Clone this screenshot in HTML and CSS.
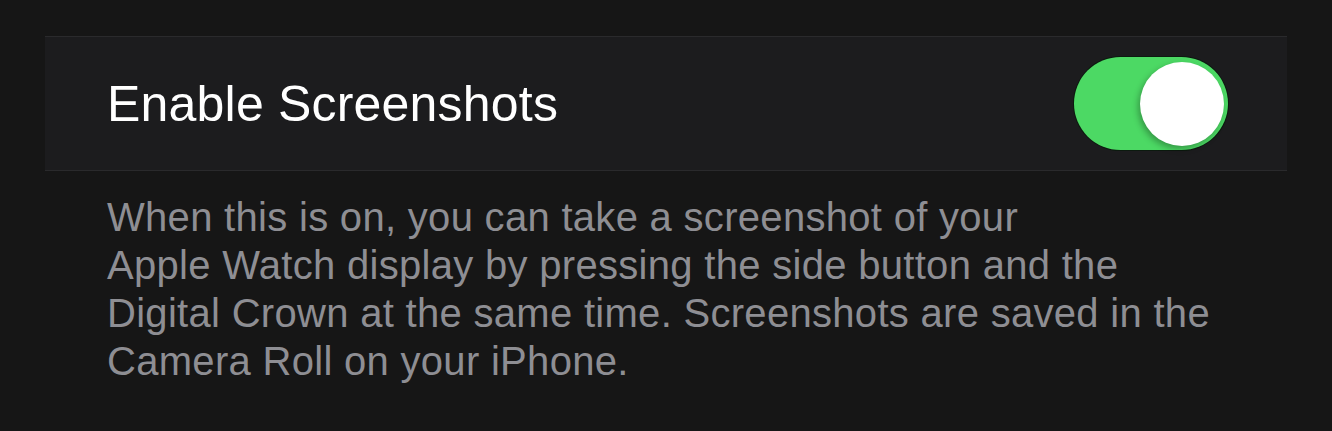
FILE: index.html
```html
<!DOCTYPE html>
<html>
<head>
<meta charset="utf-8">
<link rel="stylesheet" href="styles.css">
</head>
<body>
<div class="page">
  <div class="row">
    <span class="label">Enable Screenshots</span>
    <div class="toggle on"><div class="knob"></div></div>
  </div>
  <p class="footer">When this is on, you can take a screenshot of your<br>Apple Watch display by pressing the side button and the<br>Digital Crown at the same time. Screenshots are saved in the<br>Camera Roll on your iPhone.</p>
</div>
</body>
</html>
```
FILE: styles.css
```css
html, body {
  margin: 0;
  padding: 0;
  background: #161616;
}
.page {
  padding: 36px 45px 0 45px;
  font-family: "Liberation Sans", Arial, sans-serif;
}
.row {
  box-sizing: border-box;
  height: 135px;
  width: 1242px;
  background: #1c1c1e;
  border-top: 1px solid #2a2a2c;
  border-bottom: 1px solid #2a2a2c;
  display: flex;
  align-items: center;
  justify-content: space-between;
  padding: 0 59px 0 62px;
}
.label {
  color: #ffffff;
  font-size: 50px;
  line-height: 60px;
  letter-spacing: 0.2px;
}
.toggle {
  width: 154px;
  height: 93px;
  border-radius: 47px;
  background: #4cd964;
  box-shadow: 0 0 0 1px #0c1a0f;
  display: flex;
  align-items: center;
  justify-content: flex-end;
  padding-right: 4px;
  box-sizing: border-box;
}
.knob {
  width: 84px;
  height: 84px;
  border-radius: 50%;
  background: #ffffff;
  box-shadow: -2px 3px 6px rgba(0,0,0,0.3);
}
.footer {
  margin: 0;
  padding: 22px 0 0 62px;
  color: #8e8e93;
  font-size: 40px;
  line-height: 48px;
  letter-spacing: 0.3px;
}
```
